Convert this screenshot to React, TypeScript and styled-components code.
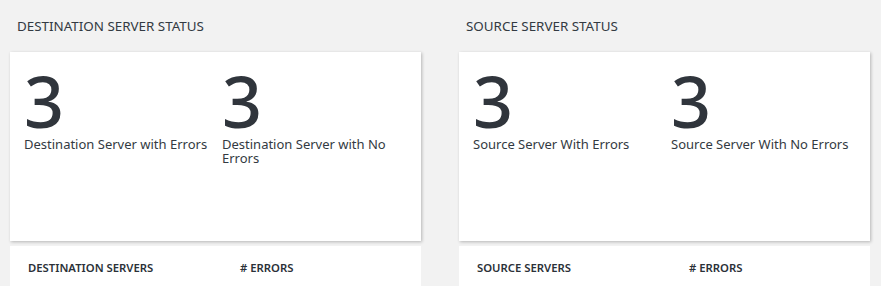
import styled, { createGlobalStyle } from "styled-components";

const GlobalStyle = createGlobalStyle`
  html, body {
    margin: 0;
    padding: 0;
    background: #f2f2f2;
  }

  body {
    font-family: "Noto Sans", "Open Sans", sans-serif;
    color: #333a42;
  }
`;

const Page = styled.div`
  display: flex;
  gap: 38px;
  padding: 0 0 0 10px;
  height: 286px;
  overflow: hidden;
`;

const Column = styled.section`
  display: flex;
  flex-direction: column;
  width: 411px;
  flex: none;
`;

const SectionTitle = styled.h2`
  margin: 0;
  padding: 18px 0 0 7px;
  height: 52px;
  box-sizing: border-box;
  font-size: 13.4px;
  line-height: 16px;
  font-weight: 400;
  color: #333a42;
`;

const StatsCard = styled.div`
  display: flex;
  height: 189px;
  box-sizing: border-box;
  padding: 21px 0 0 14px;
  background: #fff;
  box-shadow: 1px 1px 3px rgba(0, 0, 0, 0.25);
`;

const Stat = styled.div`
  display: flex;
  flex-direction: column;
  flex: none;
  width: 198px;
  padding-right: 6px;
  box-sizing: border-box;
`;

const Count = styled.div`
  font-size: 70px;
  line-height: 56px;
  font-weight: 500;
  color: #30353c;
`;

const StatLabel = styled.div`
  margin-top: 8px;
  font-size: 13px;
  line-height: 14px;
  color: #333a42;
`;

const TableCard = styled.div`
  display: flex;
  margin-top: 5px;
  flex: 1;
  padding: 14px 18px 0;
  background: #fff;
`;

const HeaderCell = styled.div<{ $width?: number }>`
  width: ${(p) => (p.$width ? `${p.$width}px` : "auto")};
  font-size: 11.3px;
  font-weight: 600;
  color: #2b3138;
  text-transform: uppercase;
`;

type Panel = {
  title: string;
  stats: { count: number; label: string }[];
  table: string;
};

const panels: Panel[] = [
  {
    title: "Destination Server Status",
    stats: [
      { count: 3, label: "Destination Server with Errors" },
      { count: 3, label: "Destination Server with No Errors" },
    ],
    table: "Destination Servers",
  },
  {
    title: "Source Server Status",
    stats: [
      { count: 3, label: "Source Server With Errors" },
      { count: 3, label: "Source Server With No Errors" },
    ],
    table: "Source Servers",
  },
];

export default function App() {
  return (
    <>
      <GlobalStyle />
      <Page>
        {panels.map((panel) => (
          <Column key={panel.title}>
            <SectionTitle>{panel.title.toUpperCase()}</SectionTitle>
            <StatsCard>
              {panel.stats.map((s) => (
                <Stat key={s.label}>
                  <Count>{s.count}</Count>
                  <StatLabel>{s.label}</StatLabel>
                </Stat>
              ))}
            </StatsCard>
            <TableCard>
              <HeaderCell $width={212}>{panel.table}</HeaderCell>
              <HeaderCell># Errors</HeaderCell>
            </TableCard>
          </Column>
        ))}
      </Page>
    </>
  );
}
